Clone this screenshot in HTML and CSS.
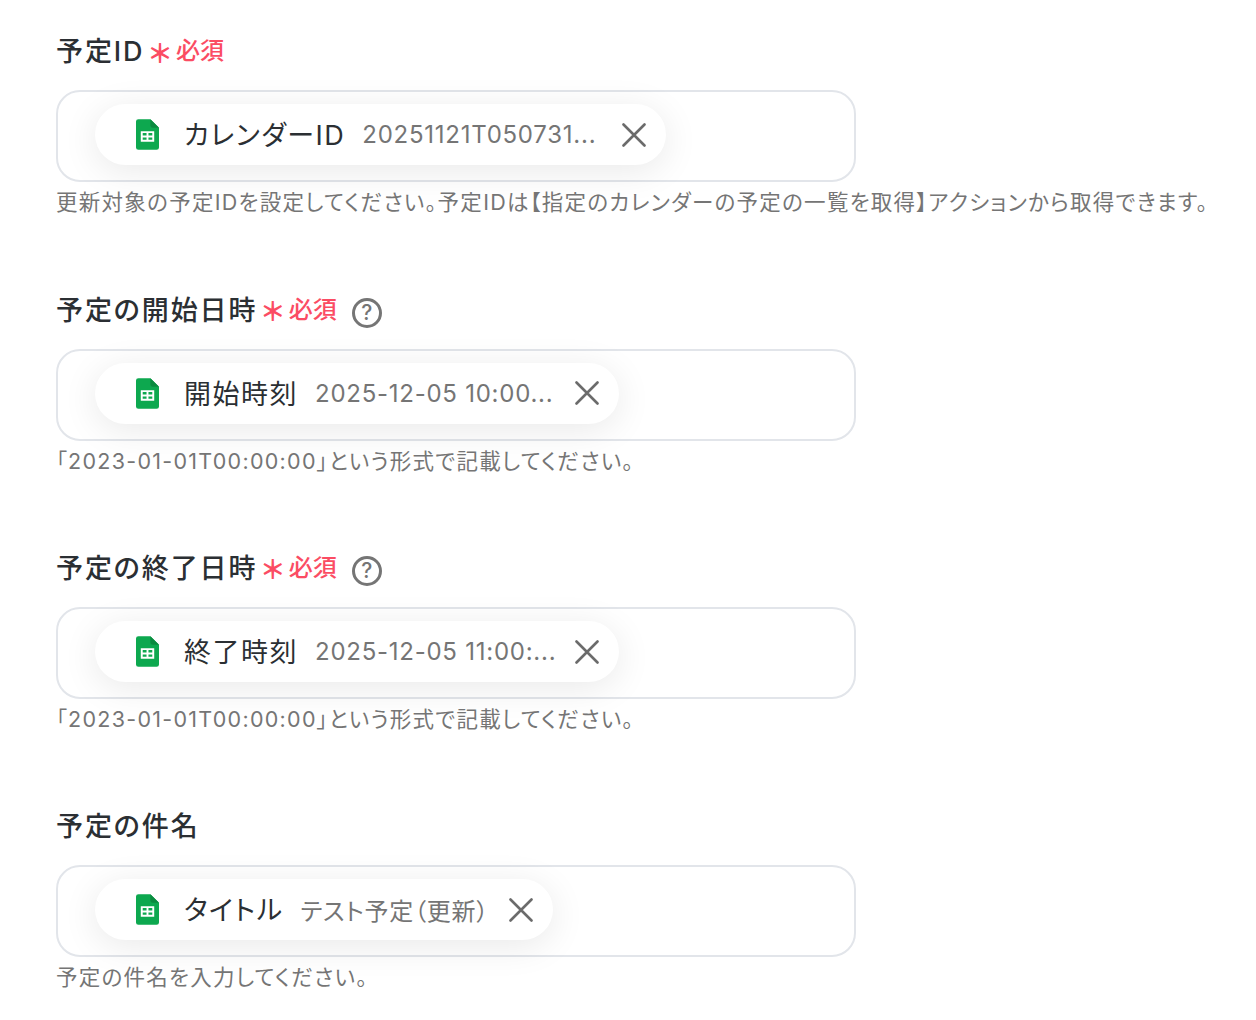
FILE: index.html
```html
<!DOCTYPE html>
<html lang="ja">
<head>
    <meta charset="UTF-8">
    <meta name="viewport" content="width=device-width, initial-scale=1.0">
    <title>予定の更新</title>
    <link rel="stylesheet" href="styles.css">
</head>
<body>
    <svg class="defs" width="0" height="0">
        <symbol id="sheet" viewBox="0 0 24 32">
            <path d="M2.500 0H15l9 9v20.500a2.500 2.500 0 0 1-2.500 2.500h-19A2.500 2.500 0 0 1 0 29.500v-27A2.500 2.500 0 0 1 2.500 0z" fill="#0da84f"/>
            <path d="M15 0l9 9h-6.500A2.500 2.500 0 0 1 15 6.500z" fill="#0a8a3f"/>
            <path d="M5 12.500h14v11H5zM7 14.500v2.500h4v-2.500zM13 14.500v2.500h4v-2.500zM7 19v2.500h4V19zM13 19v2.500h4V19z" fill="#fff" fill-rule="evenodd"/>
        </symbol>
        <symbol id="close" viewBox="0 0 24 24">
            <path d="M1.500 1.500l21 21M22.500 1.500l-21 21" fill="none" stroke="#6b6b6b" stroke-width="2.600" stroke-linecap="round"/>
        </symbol>
    </svg>

    <div class="form">
        <div class="field">
            <div class="label">
                <span>予定ID</span>
                <span class="star">＊</span>
                <span class="required">必須</span>
            </div>
            <div class="box">
                <div class="chip">
                    <svg class="sheet-icon"><use href="#sheet"/></svg>
                    <span class="chip-name">カレンダーID</span>
                    <span class="chip-value cut">20251121T050731...</span>
                    <svg class="close-icon"><use href="#close"/></svg>
                </div>
            </div>
            <p class="hint">更新対象の予定IDを設定してください。予定IDは【指定のカレンダーの予定の一覧を取得】アクションから取得できます。</p>
        </div>

        <div class="field">
            <div class="label">
                <span>予定の開始日時</span>
                <span class="star">＊</span>
                <span class="required">必須</span>
                <span class="help">?</span>
            </div>
            <div class="box">
                <div class="chip">
                    <svg class="sheet-icon"><use href="#sheet"/></svg>
                    <span class="chip-name">開始時刻</span>
                    <span class="chip-value cut">2025-12-05 10:00...</span>
                    <svg class="close-icon"><use href="#close"/></svg>
                </div>
            </div>
            <p class="hint">「2023-01-01T00:00:00」という形式で記載してください。</p>
        </div>

        <div class="field">
            <div class="label">
                <span>予定の終了日時</span>
                <span class="star">＊</span>
                <span class="required">必須</span>
                <span class="help">?</span>
            </div>
            <div class="box">
                <div class="chip">
                    <svg class="sheet-icon"><use href="#sheet"/></svg>
                    <span class="chip-name">終了時刻</span>
                    <span class="chip-value cut">2025-12-05 11:00:...</span>
                    <svg class="close-icon"><use href="#close"/></svg>
                </div>
            </div>
            <p class="hint">「2023-01-01T00:00:00」という形式で記載してください。</p>
        </div>

        <div class="field">
            <div class="label">
                <span>予定の件名</span>
            </div>
            <div class="box">
                <div class="chip">
                    <svg class="sheet-icon"><use href="#sheet"/></svg>
                    <span class="chip-name">タイトル</span>
                    <span class="chip-value">テスト予定（更新）</span>
                    <svg class="close-icon"><use href="#close"/></svg>
                </div>
            </div>
            <p class="hint">予定の件名を入力してください。</p>
        </div>
    </div>
</body>
</html>
```

FILE: styles.css
```css
html {
    height: 100%;
    overflow: hidden;
}
body {
    font-family: 'Inter', 'Noto Sans CJK JP', sans-serif;
    font-feature-settings: "palt";
    margin: 0;
    background: white;
    color: #2b2f33;
}
.defs {
    display: block;
    height: 0;
}
.form {
    padding: 29.700px 0 0 56px;
    display: flex;
    flex-direction: column;
    gap: 38px;
}
.field {
    height: 220.330px;
}
.label {
    display: flex;
    align-items: center;
    height: 40px;
    margin-bottom: 20.700px;
    font-size: 27px;
    font-weight: 500;
    letter-spacing: 1.900px;
}
.star {
    margin-left: 2.500px;
    margin-top: 3px;
    color: #fb4c63;
    font-size: 26px;
    letter-spacing: 0;
    font-weight: 700;
    font-feature-settings: normal;
}
.required {
    margin-left: 3px;
    margin-bottom: 2px;
    color: #fb4c63;
    font-size: 24px;
    font-weight: 500;
    letter-spacing: 0;
}
.help {
    display: flex;
    align-items: center;
    justify-content: center;
    width: 30px;
    height: 30px;
    box-sizing: border-box;
    margin-left: 15px;
    margin-top: 9px;
    border: 3px solid #757575;
    border-radius: 50%;
    color: #757575;
    font-size: 21px;
    font-weight: 500;
    letter-spacing: 0;
}
.box {
    box-sizing: border-box;
    width: 800px;
    height: 92px;
    padding: 12px 37px;
    border: 2px solid #e2e5ea;
    border-radius: 24px;
    background: white;
}
.chip {
    display: inline-flex;
    align-items: center;
    height: 61px;
    box-sizing: border-box;
    padding: 0 20px 0 41px;
    border-radius: 31px;
    background: white;
    box-shadow: 0 6px 36px rgba(0,0,0,0.09);
}
.sheet-icon {
    width: 23px;
    height: 31px;
    margin-right: 25px;
    flex-shrink: 0;
}
.chip-name {
    font-size: 27px;
    letter-spacing: 1.500px;
    margin-right: 17px;
    margin-bottom: 2px;
    white-space: nowrap;
}
.chip-value {
    font-size: 24px;
    letter-spacing: 0.750px;
    color: #757575;
    margin-right: 20px;
    white-space: nowrap;
}
.chip-value.cut {
    width: 240px;
}
.close-icon {
    width: 24px;
    height: 24px;
    flex-shrink: 0;
}
.hint {
    margin: 5px 0 0;
    font-size: 21.500px;
    letter-spacing: 1.280px;
    line-height: 30px;
    color: #757575;
    white-space: nowrap;
}
```
